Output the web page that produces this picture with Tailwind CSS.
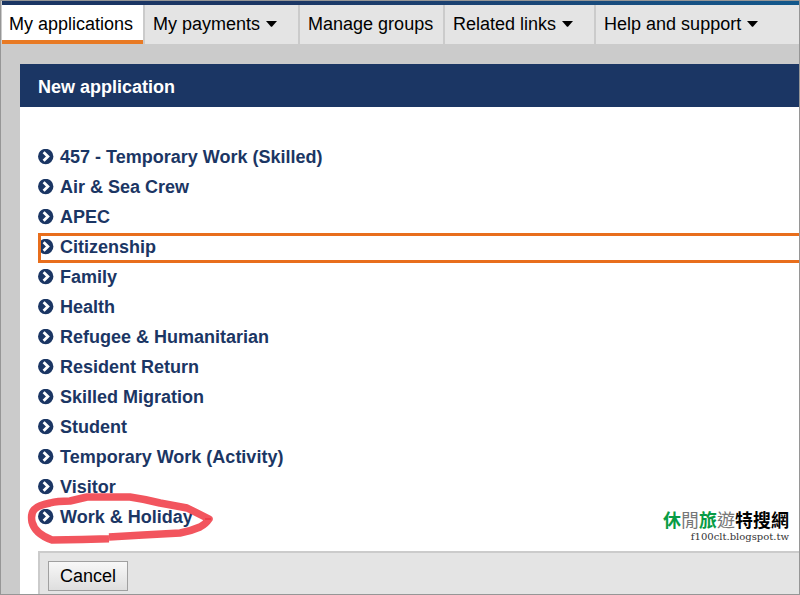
<!DOCTYPE html>
<html lang="en">
<head>
<meta charset="utf-8">
<title>New application</title>
<script src="https://cdn.jsdelivr.net/npm/@tailwindcss/browser@4"></script>
</head>
<body class="font-['Liberation_Sans',Arial,sans-serif] text-lg leading-6 text-black">
<svg class="hidden" aria-hidden="true">
  <symbol id="chevron" viewBox="0 0 16 16"><circle cx="7.700" cy="7.500" r="7.700" fill="#1b3664"/><path d="M5.600 3.300 9.900 7.500 5.600 11.700" fill="none" stroke="#fff" stroke-width="2.800"/></symbol>
  <symbol id="caret" viewBox="0 0 11 6"><path d="M0 0h11L6 5.800H5z"/></symbol>
</svg>
<div class="relative flex min-h-screen flex-col overflow-hidden border border-[#969696] bg-[#cbcbcb] pl-px">
  <div class="h-1 bg-linear-to-r from-[#1b3664] from-35% to-[#12588c] to-100%"></div>
  <nav class="flex h-[39px] bg-[#e4e4e4] whitespace-nowrap">
    <a href="#" class="border-b-4 border-[#e87a24] bg-white pt-[7px] pr-[10px] pl-[7px]">My applications</a>
    <a href="#" class="flex w-[155px] items-start gap-[6px] border-l-2 border-[#cbcbcb] pt-[7px] pl-2">My payments<svg class="mt-[9px] h-[6px] w-[11px]"><use href="#caret"/></svg></a>
    <a href="#" class="w-[145px] border-l-2 border-[#cbcbcb] pt-[7px] pl-2">Manage groups</a>
    <a href="#" class="flex w-[151px] items-start gap-[6px] border-l-2 border-[#cbcbcb] pt-[7px] pl-2">Related links<svg class="mt-[9px] h-[6px] w-[11px]"><use href="#caret"/></svg></a>
    <a href="#" class="flex grow items-start gap-[6px] border-l-2 border-[#cbcbcb] pt-[7px] pl-2">Help and support<svg class="mt-[9px] h-[6px] w-[11px]"><use href="#caret"/></svg></a>
  </nav>
  <main class="mt-5 ml-[18px] flex grow flex-col bg-white">
    <h1 class="bg-[#1b3664] px-[18px] pt-[11px] pb-2 font-bold text-white">New application</h1>
    <ul class="mt-9 ml-[18px] font-bold text-[#1b3664] [&_a]:flex [&_a]:h-[30px] [&_a]:items-center [&_a]:gap-[6px] [&_a]:pb-[2px] [&_svg]:size-4">
      <li><a href="#"><svg><use href="#chevron"/></svg>457 - Temporary Work (Skilled)</a></li>
      <li><a href="#"><svg><use href="#chevron"/></svg>Air &amp; Sea Crew</a></li>
      <li><a href="#"><svg><use href="#chevron"/></svg>APEC</a></li>
      <li><a href="#" class="-mr-[3px] outline-3 -outline-offset-3 outline-[#e86e1c]"><svg><use href="#chevron"/></svg>Citizenship</a></li>
      <li><a href="#"><svg><use href="#chevron"/></svg>Family</a></li>
      <li><a href="#"><svg><use href="#chevron"/></svg>Health</a></li>
      <li><a href="#"><svg><use href="#chevron"/></svg>Refugee &amp; Humanitarian</a></li>
      <li><a href="#"><svg><use href="#chevron"/></svg>Resident Return</a></li>
      <li><a href="#"><svg><use href="#chevron"/></svg>Skilled Migration</a></li>
      <li><a href="#"><svg><use href="#chevron"/></svg>Student</a></li>
      <li><a href="#"><svg><use href="#chevron"/></svg>Temporary Work (Activity)</a></li>
      <li><a href="#"><svg><use href="#chevron"/></svg>Visitor</a></li>
      <li class="relative"><a href="#"><svg><use href="#chevron"/></svg>Work &amp; Holiday</a>
        <span class="pointer-events-none absolute -top-[13px] -left-[12px] [&_svg]:h-[56px] [&_svg]:w-[190px]"><svg viewBox="0 0 190 56" fill="none" stroke="#f2555e" stroke-width="7.500" stroke-linejoin="round"><path d="M83 48.700 56 49.500 26 50C15 46 8 40 6 32C4 21 8 16 24 13C31 11 38 11 44 11L61 7H104C118 9 126 11 134 13L161 18L183 29C181 32 178 35 174 37Q165 41 154 43L117 45L83 47"/><path d="M179 29h6" stroke="#ee3d48" stroke-width="2"/></svg></span>
      </li>
    </ul>
    <footer class="mt-[18px] ml-[18px] grow border-t-2 border-l-2 border-[#cbcbcb] bg-[#e4e4e4] pt-2 pl-2">
      <button type="button" class="block h-[30px] w-20 border border-[#a0a0a0] bg-linear-to-b from-[#f8f8f8] to-[#dedede]">Cancel</button>
    </footer>
  </main>
  <div class="absolute right-[10px] bottom-[51px] text-right whitespace-nowrap">
    <p class="font-['Noto_Sans_CJK_TC',sans-serif] text-lg leading-6 font-bold" lang="zh-Hant"><span class="text-[#079c45]">休</span><span class="font-normal text-[#777]">閒</span><span class="text-[#079c45]">旅</span><span class="font-normal text-[#777]">遊</span>特搜網</p>
    <p class="font-['DejaVu_Serif',serif] text-[10px] leading-3 text-[#333]">f100clt.blogspot.tw</p>
  </div>
</div>
</body>
</html>
